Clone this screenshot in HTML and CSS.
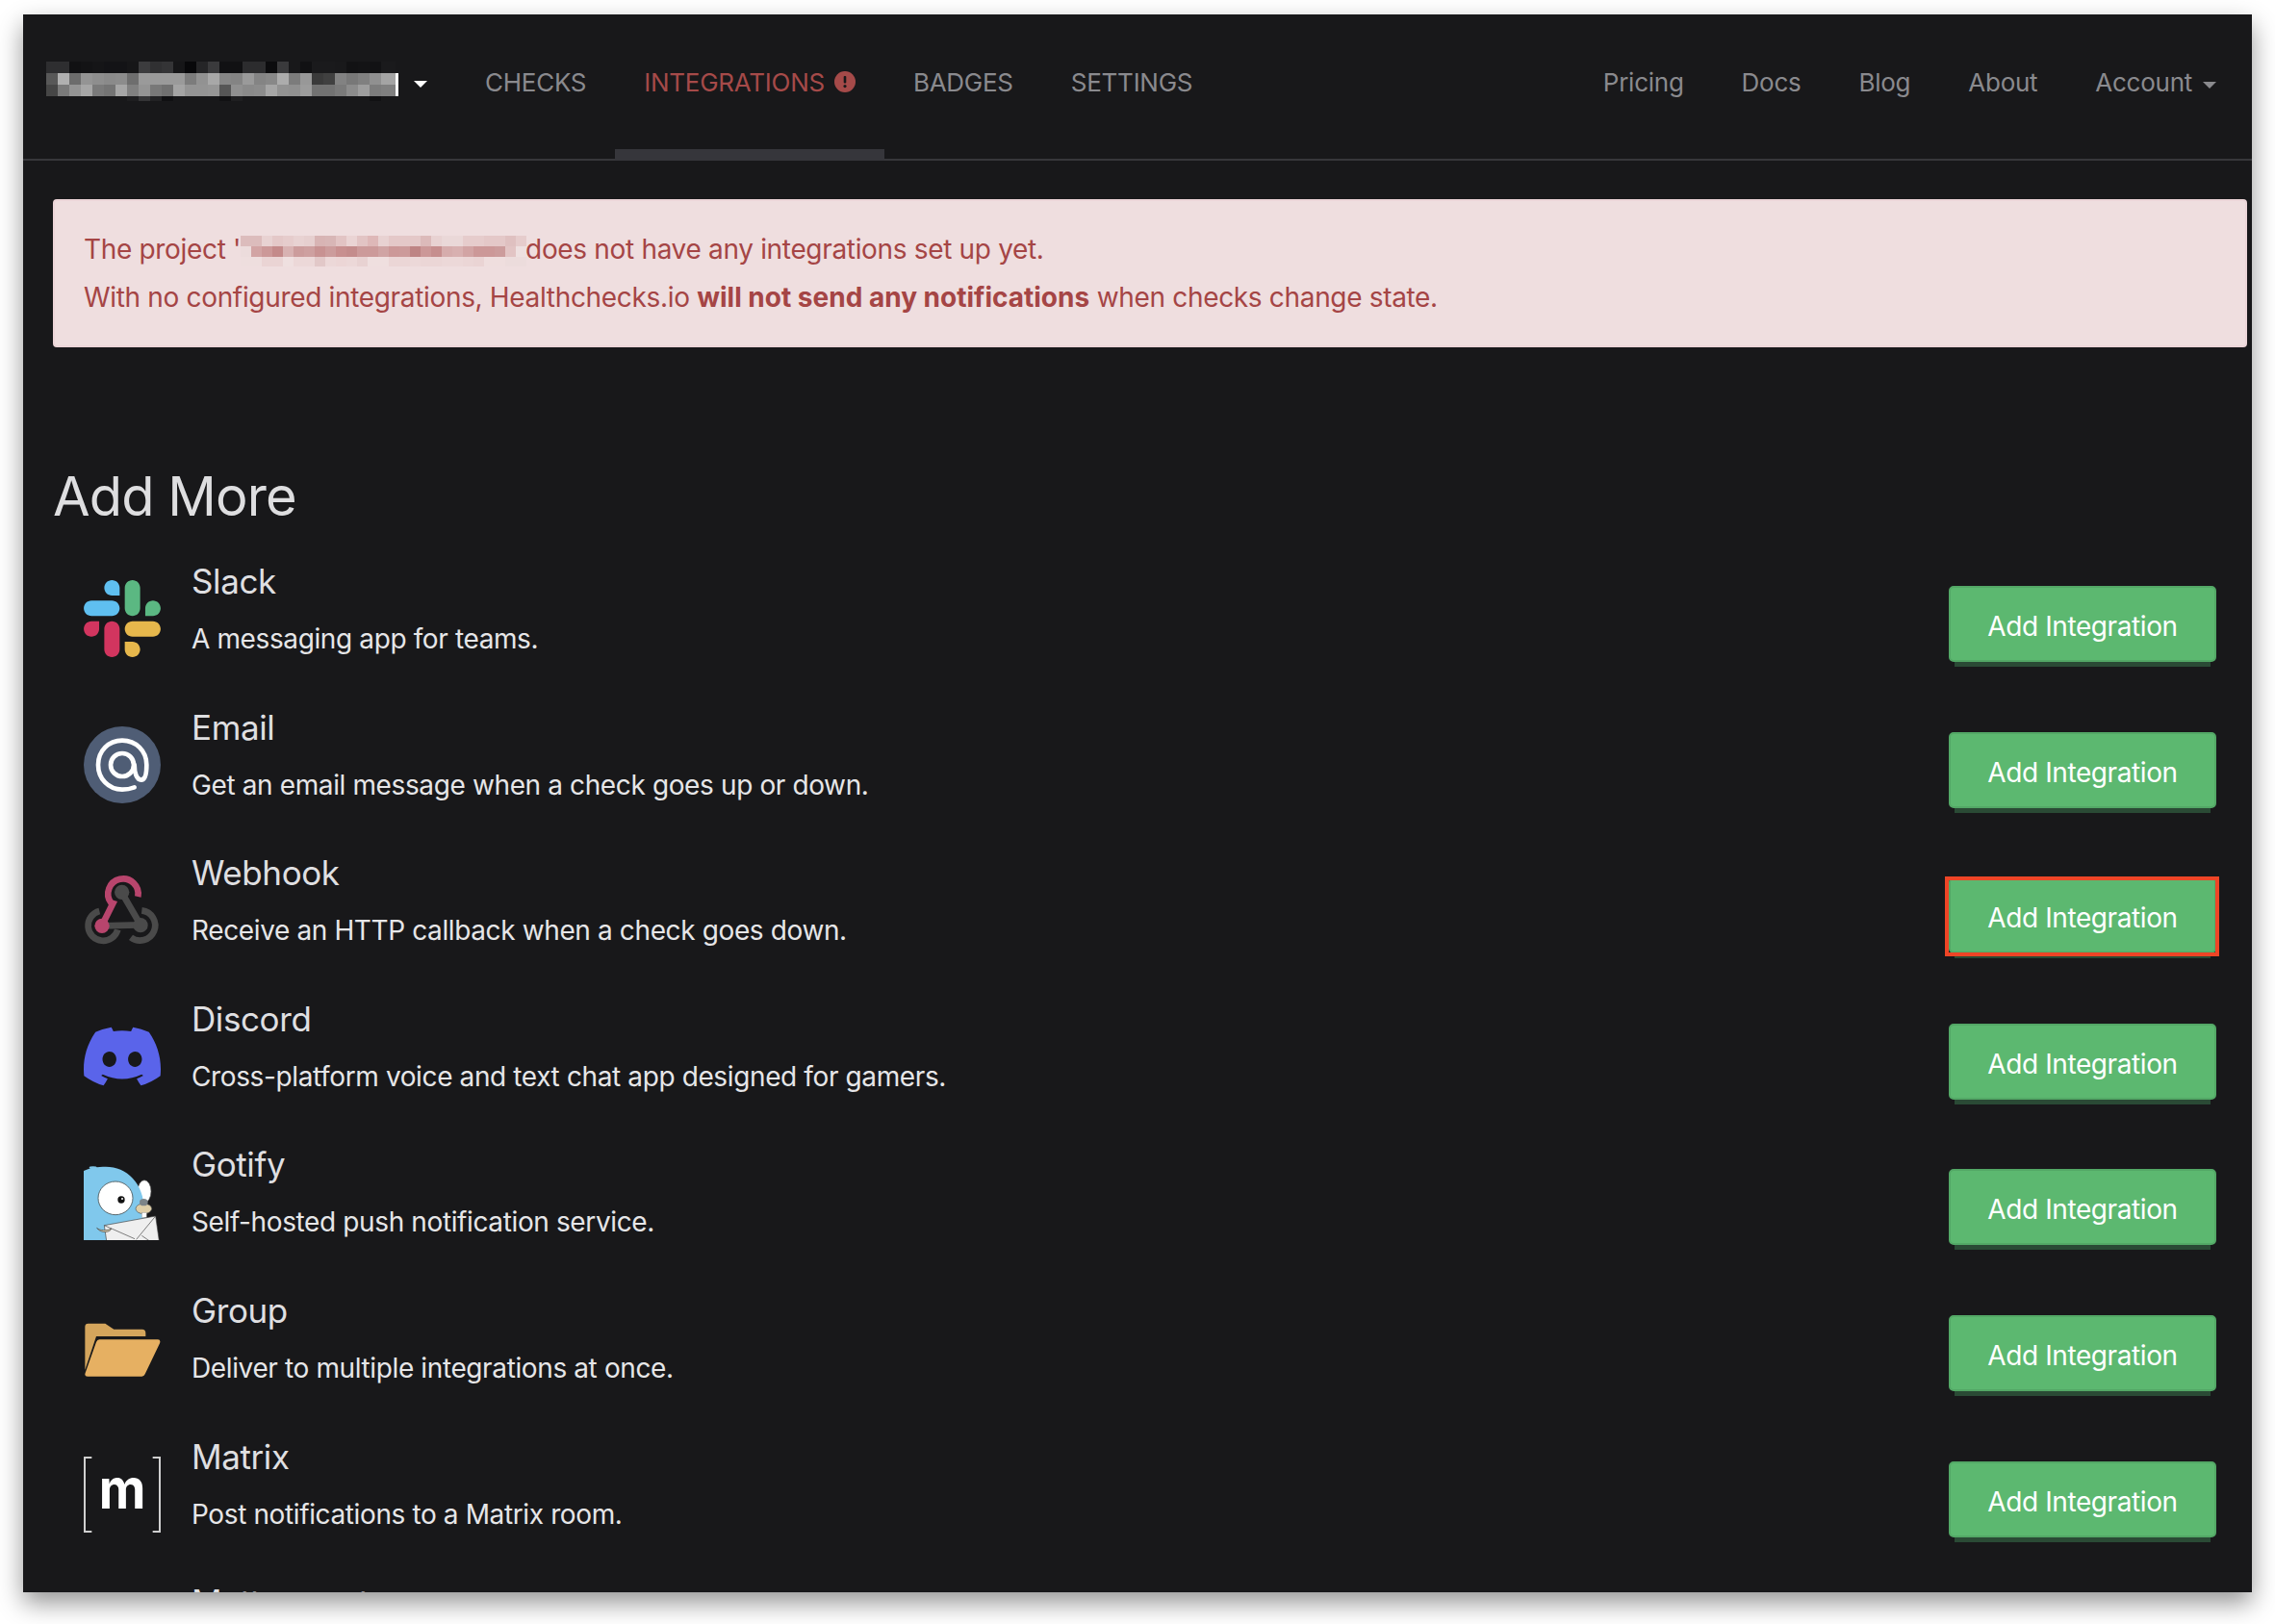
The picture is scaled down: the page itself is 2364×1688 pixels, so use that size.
FILE: index.html
```html
<!DOCTYPE html>
<html lang="en">
<head>
<meta charset="utf-8">
<title>Integrations</title>
<link rel="stylesheet" href="styles.css">
</head>
<body>
<div class="window">
  <nav class="navbar">
    <div class="brand">
      <svg class="redact-nav" width="366" height="41" viewBox="0 0 366 41" shape-rendering="crispEdges" aria-hidden="true">
        <g>
          <rect x="0" width="12" height="12" fill="#2e2e30"/><rect x="12" width="12" height="12" fill="#2e2e30"/><rect x="24" width="12" height="12" fill="#111113"/><rect x="36" width="12" height="12" fill="#131315"/><rect x="48" width="12" height="12" fill="#151517"/><rect x="60" width="12" height="12" fill="#131316"/><rect x="72" width="12" height="12" fill="#131316"/><rect x="84" width="12" height="12" fill="#161618"/><rect x="96" width="12" height="12" fill="#3c3c3e"/><rect x="108" width="12" height="12" fill="#303032"/><rect x="120" width="12" height="12" fill="#343436"/><rect x="132" width="12" height="12" fill="#161618"/><rect x="144" width="12" height="12" fill="#08080a"/><rect x="156" width="12" height="12" fill="#252527"/><rect x="168" width="12" height="12" fill="#3a3a3c"/><rect x="180" width="12" height="12" fill="#111113"/><rect x="192" width="12" height="12" fill="#111113"/><rect x="204" width="12" height="12" fill="#2c2c2e"/><rect x="216" width="12" height="12" fill="#2c2c2e"/><rect x="228" width="12" height="12" fill="#0c0c0e"/><rect x="240" width="12" height="12" fill="#3a3a3c"/><rect x="252" width="12" height="12" fill="#18181a"/><rect x="264" width="12" height="12" fill="#111113"/><rect x="276" width="12" height="12" fill="#1a1a1c"/><rect x="288" width="12" height="12" fill="#1a1a1c"/><rect x="300" width="12" height="12" fill="#19191b"/><rect x="312" width="12" height="12" fill="#121214"/><rect x="324" width="12" height="12" fill="#131315"/><rect x="336" width="12" height="12" fill="#121214"/><rect x="348" width="15" height="12" fill="#1a1a1c"/>
        </g>
        <g transform="translate(0 12)">
          <rect x="0" width="12" height="12" fill="#585858"/><rect x="12" width="12" height="12" fill="#b0b0b0"/><rect x="24" width="12" height="12" fill="#6c6c6c"/><rect x="36" width="12" height="12" fill="#949494"/><rect x="48" width="12" height="12" fill="#8e8e8e"/><rect x="60" width="12" height="12" fill="#8a8a8a"/><rect x="72" width="12" height="12" fill="#8c8c8c"/><rect x="84" width="12" height="12" fill="#6e6e6e"/><rect x="96" width="12" height="12" fill="#9a9a9a"/><rect x="108" width="12" height="12" fill="#9a9a9a"/><rect x="120" width="12" height="12" fill="#9a9a9a"/><rect x="132" width="12" height="12" fill="#9a9a9a"/><rect x="144" width="12" height="12" fill="#7c7c7c"/><rect x="156" width="12" height="12" fill="#929292"/><rect x="168" width="12" height="12" fill="#a8a8a8"/><rect x="180" width="12" height="12" fill="#868686"/><rect x="192" width="12" height="12" fill="#848484"/><rect x="204" width="12" height="12" fill="#9a9a9a"/><rect x="216" width="12" height="12" fill="#848484"/><rect x="228" width="12" height="12" fill="#888888"/><rect x="240" width="12" height="12" fill="#acacac"/><rect x="252" width="12" height="12" fill="#7c7c7c"/><rect x="264" width="12" height="12" fill="#989898"/><rect x="276" width="12" height="12" fill="#3a3a3a"/><rect x="288" width="12" height="12" fill="#404040"/><rect x="300" width="12" height="12" fill="#828282"/><rect x="312" width="12" height="12" fill="#787878"/><rect x="324" width="12" height="12" fill="#808080"/><rect x="336" width="12" height="12" fill="#909090"/><rect x="348" width="15" height="12" fill="#a4a4a4"/>
        </g>
        <g transform="translate(0 24)">
          <rect x="0" width="12" height="12" fill="#464646"/><rect x="12" width="12" height="12" fill="#7a7a7a"/><rect x="24" width="12" height="12" fill="#949494"/><rect x="36" width="12" height="12" fill="#a6a6a6"/><rect x="48" width="12" height="12" fill="#7a7a7a"/><rect x="60" width="12" height="12" fill="#747474"/><rect x="72" width="12" height="12" fill="#a6a6a6"/><rect x="84" width="12" height="12" fill="#808080"/><rect x="96" width="12" height="12" fill="#949494"/><rect x="108" width="12" height="12" fill="#787878"/><rect x="120" width="12" height="12" fill="#707070"/><rect x="132" width="12" height="12" fill="#a4a4a4"/><rect x="144" width="12" height="12" fill="#949494"/><rect x="156" width="12" height="12" fill="#949494"/><rect x="168" width="12" height="12" fill="#969696"/><rect x="180" width="12" height="12" fill="#565656"/><rect x="192" width="12" height="12" fill="#909090"/><rect x="204" width="12" height="12" fill="#8a8a8a"/><rect x="216" width="12" height="12" fill="#8c8c8c"/><rect x="228" width="12" height="12" fill="#a6a6a6"/><rect x="240" width="12" height="12" fill="#929292"/><rect x="252" width="12" height="12" fill="#909090"/><rect x="264" width="12" height="12" fill="#9c9c9c"/><rect x="276" width="12" height="12" fill="#727272"/><rect x="288" width="12" height="12" fill="#727272"/><rect x="300" width="12" height="12" fill="#7a7a7a"/><rect x="312" width="12" height="12" fill="#8c8c8c"/><rect x="324" width="12" height="12" fill="#9e9e9e"/><rect x="336" width="12" height="12" fill="#7c7c7c"/><rect x="348" width="15" height="12" fill="#808080"/>
        </g>
        <g transform="translate(0 36)">
          <rect x="84" width="12" height="5" fill="#1e1e20"/><rect x="96" width="12" height="5" fill="#343436"/><rect x="108" width="12" height="5" fill="#222224"/><rect x="120" width="12" height="5" fill="#101012"/><rect x="180" width="12" height="5" fill="#111113"/><rect x="192" width="12" height="5" fill="#1f1f21"/><rect x="336" width="12" height="5" fill="#111113"/>
        </g>
        <rect x="363" y="12" width="3" height="24" fill="#ffffff"/>
      </svg>
      <span class="caret caret-white"></span>
    </div>
    <ul class="nav-main">
      <li class="nav-item"><a class="nav-link">CHECKS</a></li>
      <li class="nav-item is-active"><a class="nav-link">INTEGRATIONS<svg class="badge" width="22" height="22" viewBox="0 0 22 22" aria-hidden="true"><circle cx="11" cy="11" r="11" fill="#a54a49"/><rect x="9.7" y="5" width="2.6" height="7.5" rx="1" fill="#18181a"/><circle cx="11" cy="15.6" r="1.6" fill="#18181a"/></svg></a></li>
      <li class="nav-item"><a class="nav-link">BADGES</a></li>
      <li class="nav-item"><a class="nav-link">SETTINGS</a></li>
    </ul>
    <ul class="nav-right">
      <li class="nav-item"><a class="nav-link">Pricing</a></li>
      <li class="nav-item"><a class="nav-link">Docs</a></li>
      <li class="nav-item"><a class="nav-link">Blog</a></li>
      <li class="nav-item"><a class="nav-link">About</a></li>
      <li class="nav-item"><a class="nav-link">Account<span class="caret caret-grey"></span></a></li>
    </ul>
  </nav>

  <main class="content">
    <div class="alert">
      <p class="alert-line">The project '<svg class="redact-alert" width="299" height="32" viewBox="0 0 297 32" shape-rendering="crispEdges" aria-hidden="true">
        <g>
          <rect x="0" width="11" height="11" fill="#dcbcbc"/><rect x="11" width="11" height="11" fill="#dcbcbc"/><rect x="22" width="11" height="11" fill="#e8d2d2"/><rect x="33" width="11" height="11" fill="#e4c8c8"/><rect x="44" width="11" height="11" fill="#e6cccc"/><rect x="55" width="11" height="11" fill="#e8d2d2"/><rect x="66" width="11" height="11" fill="#e6cfcf"/><rect x="77" width="11" height="11" fill="#d8b4b4"/><rect x="88" width="11" height="11" fill="#d8b6b6"/><rect x="99" width="11" height="11" fill="#e2c4c4"/><rect x="110" width="11" height="11" fill="#ead4d4"/><rect x="121" width="11" height="11" fill="#e2c4c4"/><rect x="132" width="11" height="11" fill="#deb8b8"/><rect x="143" width="11" height="11" fill="#e8d2d2"/><rect x="154" width="11" height="11" fill="#e4c8c8"/><rect x="165" width="11" height="11" fill="#e4c8c8"/><rect x="176" width="11" height="11" fill="#e4c8c8"/><rect x="187" width="11" height="11" fill="#dcbaba"/><rect x="198" width="11" height="11" fill="#e8d2d2"/><rect x="209" width="11" height="11" fill="#ead8d8"/><rect x="220" width="11" height="11" fill="#ead8d8"/><rect x="231" width="11" height="11" fill="#e6cccc"/><rect x="242" width="11" height="11" fill="#e6cccc"/><rect x="253" width="11" height="11" fill="#e4c8c8"/><rect x="264" width="11" height="11" fill="#e4c8c8"/><rect x="275" width="11" height="11" fill="#dfc0c0"/><rect x="286" width="11" height="11" fill="#e6cccc"/>
        </g>
        <g transform="translate(0 11)">
          <rect x="0" width="11" height="11" fill="#ecdcdc"/><rect x="11" width="11" height="11" fill="#d2a4a4"/><rect x="22" width="11" height="11" fill="#cc9898"/><rect x="33" width="11" height="11" fill="#c48a8a"/><rect x="44" width="11" height="11" fill="#d8b2b2"/><rect x="55" width="11" height="11" fill="#cc9c9c"/><rect x="66" width="11" height="11" fill="#cea0a0"/><rect x="77" width="11" height="11" fill="#c89292"/><rect x="88" width="11" height="11" fill="#cc9c9c"/><rect x="99" width="11" height="11" fill="#c89090"/><rect x="110" width="11" height="11" fill="#c48c8c"/><rect x="121" width="11" height="11" fill="#cc9a9a"/><rect x="132" width="11" height="11" fill="#cc9a9a"/><rect x="143" width="11" height="11" fill="#d0a4a4"/><rect x="154" width="11" height="11" fill="#cc9898"/><rect x="165" width="11" height="11" fill="#cc9a9a"/><rect x="176" width="11" height="11" fill="#be8484"/><rect x="187" width="11" height="11" fill="#cc9898"/><rect x="198" width="11" height="11" fill="#c68e8e"/><rect x="209" width="11" height="11" fill="#d6acac"/><rect x="220" width="11" height="11" fill="#d8b0b0"/><rect x="231" width="11" height="11" fill="#d2a4a4"/><rect x="242" width="11" height="11" fill="#cc9898"/><rect x="253" width="11" height="11" fill="#cc9898"/><rect x="264" width="11" height="11" fill="#cc9c9c"/><rect x="275" width="11" height="11" fill="#e2c4c4"/><rect x="286" width="11" height="11" fill="#eee0e0"/>
        </g>
        <g transform="translate(0 22)">
          <rect x="0" width="11" height="10" fill="#eedede"/><rect x="11" width="11" height="10" fill="#eedede"/><rect x="22" width="11" height="10" fill="#ead4d4"/><rect x="33" width="11" height="10" fill="#ead4d4"/><rect x="44" width="11" height="10" fill="#efe0e0"/><rect x="55" width="11" height="10" fill="#ecd8d8"/><rect x="66" width="11" height="10" fill="#ecd8d8"/><rect x="77" width="11" height="10" fill="#e2c8c8"/><rect x="88" width="11" height="10" fill="#ecd8d8"/><rect x="99" width="11" height="10" fill="#ecd6d6"/><rect x="110" width="11" height="10" fill="#ecd8d8"/><rect x="121" width="11" height="10" fill="#e8d2d2"/><rect x="132" width="11" height="10" fill="#efdfdf"/><rect x="143" width="11" height="10" fill="#efdfdf"/><rect x="154" width="11" height="10" fill="#ebd6d6"/><rect x="165" width="11" height="10" fill="#ebd6d6"/><rect x="176" width="11" height="10" fill="#ecd8d8"/><rect x="187" width="11" height="10" fill="#ebd6d6"/><rect x="198" width="11" height="10" fill="#ebd6d6"/><rect x="209" width="11" height="10" fill="#ecd8d8"/><rect x="220" width="11" height="10" fill="#ecd8d8"/><rect x="231" width="11" height="10" fill="#ebd6d6"/><rect x="242" width="11" height="10" fill="#ead4d4"/><rect x="253" width="11" height="10" fill="#efdede"/><rect x="264" width="11" height="10" fill="#efdede"/><rect x="275" width="11" height="10" fill="#ecdcdc"/><rect x="286" width="11" height="10" fill="#ecdcdc"/>
        </g>
      </svg>does not have any integrations set up yet.</p>
      <p class="alert-line">With no configured integrations, Healthchecks.io <strong>will not send any notifications</strong> when checks change state.</p>
    </div>

    <h2 class="section-title">Add More</h2>

    <ul class="integrations">
      <li class="row">
        <svg class="icon" viewBox="0 0 2447.6 2452.5" aria-hidden="true">
          <path fill="#5fbff0" d="M897.4 0c-135.3.1-244.8 109.9-244.7 245.2-.1 135.3 109.5 245.1 244.8 245.2h244.8V245.3c.1-135.3-109.5-245.1-244.9-245.3.1 0 .1 0 0 0m0 654H244.8C109.5 654.1-.1 763.9 0 899.2c-.2 135.3 109.4 245.1 244.7 245.3h652.7c135.3-.1 244.9-109.9 244.8-245.2.1-135.4-109.5-245.2-244.8-245.3z"/>
          <path fill="#5bb882" d="M2447.6 899.2c.1-135.3-109.5-245.1-244.8-245.2-135.3.1-244.9 109.9-244.8 245.2v245.3h244.8c135.3-.1 244.9-109.9 244.8-245.3zm-652.7 0V245.2c.1-135.2-109.4-245-244.7-245.2-135.3.1-244.9 109.9-244.8 245.2v654c-.2 135.3 109.4 245.1 244.7 245.3 135.3-.1 244.9-109.9 244.8-245.3z"/>
          <path fill="#e6b74c" d="M1550.1 2452.5c135.3-.1 244.9-109.9 244.8-245.2.1-135.3-109.5-245.1-244.8-245.2h-244.8v245.2c-.1 135.2 109.5 245 244.8 245.2zm0-654.1h652.7c135.3-.1 244.9-109.9 244.8-245.2.2-135.3-109.4-245.1-244.7-245.3h-652.7c-135.3.1-244.9 109.9-244.8 245.2-.1 135.4 109.4 245.2 244.7 245.3z"/>
          <path fill="#d2355f" d="M0 1553.2c-.1 135.3 109.5 245.1 244.8 245.2 135.3-.1 244.9-109.9 244.8-245.2v-245.2H244.8c-135.3.1-244.9 109.9-244.8 245.2zm652.7 0v654c-.2 135.3 109.4 245.1 244.7 245.3 135.3-.1 244.9-109.9 244.8-245.2v-653.9c.2-135.3-109.4-245.1-244.7-245.3-135.4 0-244.9 109.8-244.8 245.1 0 0 0 0 0 0z"/>
        </svg>
        <div class="row-text"><h3 class="row-title">Slack</h3><p class="row-desc">A messaging app for teams.</p></div>
        <a class="btn">Add Integration</a>
      </li>
      <li class="row">
        <svg class="icon" viewBox="80 70 240 240" aria-hidden="true">
          <circle cx="200" cy="190" r="120" fill="#4f5d75"/>
          <circle cx="200" cy="190" r="36" fill="none" stroke="#fff" stroke-width="14"/>
          <path fill="none" stroke="#fff" stroke-width="14" stroke-linecap="round" d="M238 260C225 265 213 267 200 267C157 267 125 233 125 190C125 147 157 114 200 114C243 114 276 147 276 190C276 205 275 237 259 237C245 237 238 215 238 190"/>
        </svg>
        <div class="row-text"><h3 class="row-title">Email</h3><p class="row-desc">Get an email message when a check goes up or down.</p></div>
        <a class="btn">Add Integration</a>
      </li>
      <li class="row">
        <svg class="icon" viewBox="81 531 240 240" aria-hidden="true">
          <g fill="none" stroke="#4a4a4a" stroke-width="20">
            <path d="M130 654A47 47 0 1 0 187 712"/>
            <path d="M228 736A47 47 0 1 0 262 652"/>
            <path d="M200 597L258 697L138 700"/>
          </g>
          <circle cx="200" cy="595" r="23" fill="#4a4a4a"/>
          <circle cx="258" cy="698" r="23" fill="#4a4a4a"/>
          <path fill="none" stroke="#b8456d" stroke-width="20" d="M250 609A47 47 0 1 0 166 628L172 630L138 698"/>
          <circle cx="138" cy="700" r="23" fill="#b8456d"/>
        </svg>
        <div class="row-text"><h3 class="row-title">Webhook</h3><p class="row-desc">Receive an HTTP callback when a check goes down.</p></div>
        <a class="btn btn-marked">Add Integration</a>
      </li>
      <li class="row">
        <svg class="icon" viewBox="0 -15.4 127.14 127.14" aria-hidden="true">
          <path fill="#5a64ea" d="M107.7,8.07A105.15,105.15,0,0,0,81.47,0a72.06,72.06,0,0,0-3.36,6.83A97.68,97.68,0,0,0,49,6.83,72.37,72.37,0,0,0,45.64,0,105.89,105.89,0,0,0,19.39,8.09C2.79,32.65-1.71,56.6.54,80.21h0A105.73,105.73,0,0,0,32.71,96.36,77.7,77.7,0,0,0,39.6,85.25a68.42,68.42,0,0,1-10.85-5.18c.91-.66,1.8-1.34,2.66-2a75.57,75.57,0,0,0,64.32,0c.87.71,1.76,1.39,2.66,2a68.68,68.68,0,0,1-10.87,5.19,77,77,0,0,0,6.89,11.1A105.25,105.25,0,0,0,126.6,80.22h0C129.24,52.84,122.09,29.11,107.7,8.07ZM42.45,65.69C36.18,65.69,31,60,31,53s5-12.74,11.43-12.74S54,46,53.89,53,48.84,65.69,42.45,65.69Zm42.24,0C78.41,65.69,73.25,60,73.25,53s5-12.74,11.44-12.74S96.23,46,96.12,53,91.08,65.69,84.69,65.69Z"/>
        </svg>
        <div class="row-text"><h3 class="row-title">Discord</h3><p class="row-desc">Cross-platform voice and text chat app designed for gamers.</p></div>
        <a class="btn">Add Integration</a>
      </li>
      <li class="row">
        <svg class="icon" viewBox="81 534 240 240" aria-hidden="true">
          <ellipse cx="110" cy="548" rx="12" ry="4" fill="#7fc6e8"/>
          <ellipse cx="270" cy="622" rx="21" ry="35" fill="#fff" stroke="#555" stroke-width="2"/>
          <path fill="#80c8ec" d="M81 558C100 548 125 545 150 545C215 545 268 595 270 680L275 776H81Z"/>
          <ellipse cx="180" cy="643" rx="54" ry="52" fill="#fff" stroke="#5a6a70" stroke-width="3"/>
          <circle cx="198" cy="648" r="11" fill="#111"/>
          <circle cx="201" cy="645" r="3" fill="#fff"/>
          <ellipse cx="268" cy="676" rx="25" ry="16" fill="#e0cfa8" stroke="#555" stroke-width="2"/>
          <rect x="262" y="688" width="15" height="16" fill="#fff" stroke="#777"/>
          <ellipse cx="268" cy="656" rx="13" ry="11" fill="#7d8488"/>
          <path fill="#efefef" stroke="#444" stroke-width="2" d="M145 728L305 699L316 776H152Z"/>
          <path fill="none" stroke="#444" stroke-width="2" d="M145 728L240 770M305 699L245 772M262 760L285 776"/>
          <path fill="#e0cfa8" stroke="#444" stroke-width="2" d="M122 736C130 745 155 745 167 738C165 750 135 755 122 736Z"/>
        </svg>
        <div class="row-text"><h3 class="row-title">Gotify</h3><p class="row-desc">Self-hosted push notification service.</p></div>
        <a class="btn">Add Integration</a>
      </li>
      <li class="row">
        <svg class="icon" viewBox="81 66 240 240" aria-hidden="true">
          <path fill="#d4a55c" d="M95 110H148L175 128H263Q274 128 274 140V150H120L85 255V120Q85 110 95 110Z"/>
          <path fill="#e6b062" d="M130 160H312Q322 160 318 172L272 268Q269 275 262 275H93Q82 275 86 264L120 168Q123 160 130 160Z"/>
        </svg>
        <div class="row-text"><h3 class="row-title">Group</h3><p class="row-desc">Deliver to multiple integrations at once.</p></div>
        <a class="btn">Add Integration</a>
      </li>
      <li class="row">
        <svg class="icon" viewBox="81 514 240 240" aria-hidden="true">
          <path fill="none" stroke="#cfcfcf" stroke-width="6" d="M106 520H84V751H106M296 520H318V751H296"/>
          <text class="matrix-m" x="201" y="680" text-anchor="middle" textLength="146" lengthAdjust="spacingAndGlyphs">m</text>
        </svg>
        <div class="row-text"><h3 class="row-title">Matrix</h3><p class="row-desc">Post notifications to a Matrix room.</p></div>
        <a class="btn">Add Integration</a>
      </li>
      <li class="row">
        <div class="icon"></div>
        <div class="row-text"><h3 class="row-title">Mattermost</h3><p class="row-desc">High Trust Messaging for the Enterprise.</p></div>
        <a class="btn">Add Integration</a>
      </li>
    </ul>
  </main>
</div>
</body>
</html>
```

FILE: styles.css
```css
* { box-sizing: border-box; }

html, body {
  margin: 0;
  height: 100%;
  overflow: hidden;
}

body {
  background: #ffffff;
  padding: 15px 24px 33px;
  font-family: Inter, "Liberation Sans", sans-serif;
}

.window {
  height: 1640px;
  background: #18181a;
  overflow: hidden;
  box-shadow: 0 11px 24px rgba(0, 0, 0, 0.42);
}

.navbar {
  display: flex;
  align-items: stretch;
  height: 152px;
  border-bottom: 2px solid #37373b;
  padding-right: 7px;
}

.brand {
  display: flex;
  align-items: flex-start;
  padding: 49px 0 0 24px;
  width: 450px;
}

.redact-nav { flex: none; }

.caret {
  display: inline-block;
  width: 0;
  height: 0;
  border-left: 7.5px solid transparent;
  border-right: 7.5px solid transparent;
  border-top: 7.5px solid currentColor;
}

.caret-white {
  color: #fff;
  margin: 20px 0 0 16px;
}

.caret-grey {
  color: #8a8a8e;
  margin-left: 11px;
  vertical-align: 3px;
}

.nav-main, .nav-right {
  list-style: none;
  margin: 0;
  padding: 0;
  display: flex;
}

.nav-right { margin-left: auto; }

.nav-item {
  height: 152px;
  padding: 0 30px;
  border-bottom: 12px solid transparent;
}

.nav-item.is-active {
  border-bottom-color: #36363b;
}

.nav-link {
  display: block;
  padding-top: 54px;
  font-size: 26px;
  line-height: 34px;
  letter-spacing: -0.26px;
  color: #8a8a8e;
}

.is-active .nav-link { color: #a54a49; }

.badge {
  margin-left: 10px;
  vertical-align: -1px;
}

.content {
  padding: 40px 5px 0 31px;
}

.alert {
  height: 154px;
  padding: 25px 30px;
  background: #efdedf;
  border: 2px solid #ecd5d8;
  border-radius: 4px;
  color: #a54545;
}

.alert-line {
  margin: 0;
  font-size: 28px;
  line-height: 50px;
  letter-spacing: -0.33px;
  white-space: nowrap;
}

.alert-line strong {
  font-weight: 700;
  letter-spacing: 0;
}

.redact-alert {
  vertical-align: -8px;
  margin: 0 -2px 0 -1px;
}

.section-title {
  margin: 0 0 35px;
  padding-top: 122px;
  font-size: 56px;
  line-height: 66px;
  font-weight: 400;
  letter-spacing: -0.9px;
  color: #dedee0;
}

.integrations {
  list-style: none;
  margin: 0;
  padding: 0 32px;
}

.row {
  display: grid;
  grid-template-columns: 80px 1fr 278px;
  column-gap: 32px;
  align-items: start;
  height: 151.6px;
}

.icon {
  display: block;
  width: 80px;
  height: 80px;
  margin-top: 19px;
}

.row-title {
  margin: 0;
  font-size: 35px;
  line-height: 40px;
  font-weight: 400;
  letter-spacing: -0.4px;
  color: #dfdfe1;
}

.row-desc {
  margin: 20px 0 0;
  font-size: 28px;
  line-height: 40px;
  letter-spacing: -0.38px;
  color: #e6e6e8;
}

.btn {
  position: relative;
  display: block;
  height: 79px;
  margin-top: 25px;
  background: #5cb870;
  border: 2px solid #53a866;
  border-radius: 5px;
  box-shadow: 0 11px 0 -6px #2a4a35;
  color: #fff;
  font-size: 28px;
  line-height: 80px;
  letter-spacing: -0.4px;
  text-align: center;
}

.btn-marked::after {
  content: "";
  position: absolute;
  top: -3px;
  left: -6px;
  right: -5px;
  bottom: -5px;
  border: 4px solid #ee4526;
}

.matrix-m {
  font-family: Inter, "Liberation Sans", sans-serif;
  font-size: 170px;
  font-weight: 700;
  fill: #ffffff;
}
```
